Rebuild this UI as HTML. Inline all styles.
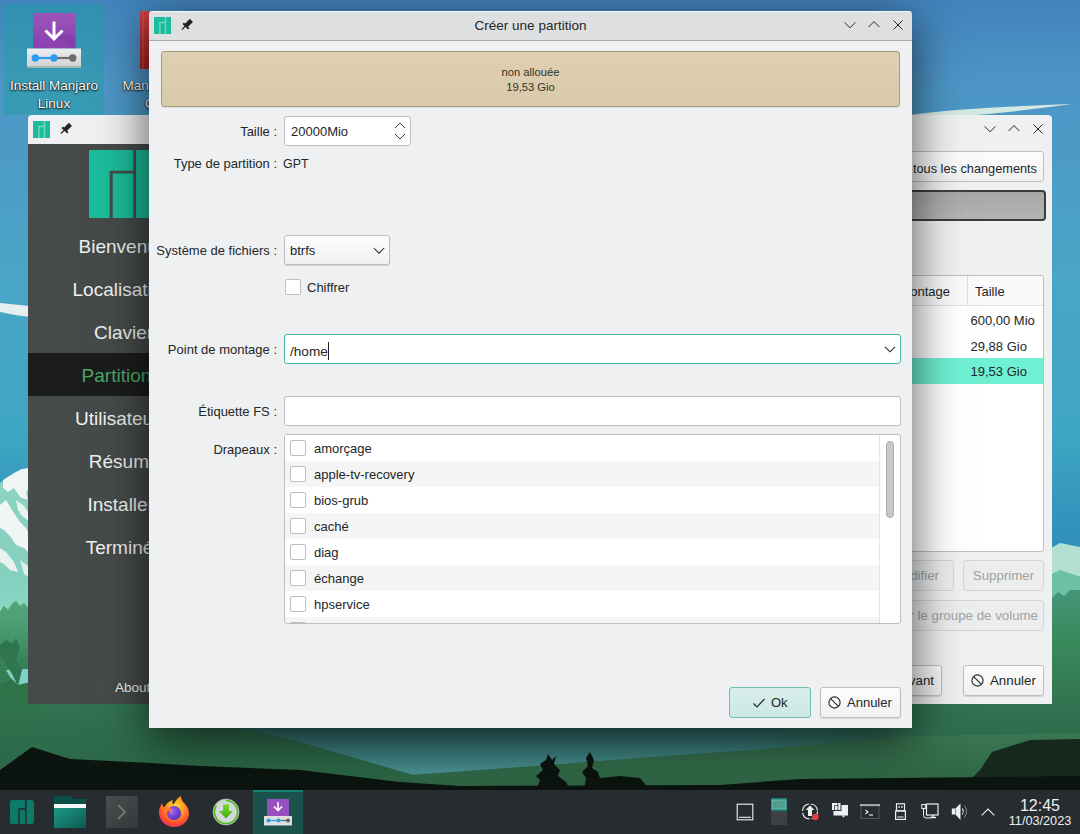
<!DOCTYPE html>
<html><head><meta charset="utf-8">
<style>
*{box-sizing:border-box;margin:0;padding:0}
html,body{width:1080px;height:834px;overflow:hidden}
body{position:relative;font-family:"Liberation Sans",sans-serif;color:#232627;background:#3b7fb6}
.a{position:absolute}
#wall{position:absolute;left:0;top:0;width:1080px;height:790px}
/* desktop icons */
.dlabel{position:absolute;color:#fff;font-size:13.5px;line-height:18px;text-align:center;text-shadow:0 1px 2px #000,0 0 1px #000}
/* calamares */
#cal{left:28px;top:115px;width:1024px;height:589px;background:#eff0f1;border-radius:4px 4px 0 0;overflow:hidden}
#side{left:0;top:29px;width:190px;height:560px;background:#464a49}
.si{position:absolute;left:0;width:190px;text-align:center;font-size:19px;color:#eff0f1;height:43px;line-height:45px}
/* dialog */
#dlg{left:149px;top:11px;width:763px;height:717px;background:#eff0f1;border-radius:4px 4px 0 0;overflow:hidden}
#dtb{left:0;top:0;width:763px;height:30px;background:#dedfe0;border-bottom:1px solid #a8a9aa;box-shadow:inset 0 1px 0 #f8f9f9}
.lbl{position:absolute;font-size:13px;white-space:nowrap;text-align:right}
.fld{position:absolute;background:#fff;border:1px solid #bcbebf;border-radius:3px}
.btn{position:absolute;border:1px solid #bcbebf;border-radius:3px;background:linear-gradient(#fcfcfc,#f1f1f1);font-size:13px}
</style></head><body>
<svg id="wall" width="1080" height="790" viewBox="0 0 1080 790">
  <defs>
    <linearGradient id="sky" x1="0" y1="0" x2="0" y2="1">
      <stop offset="0" stop-color="#4283bd"/>
      <stop offset="0.1" stop-color="#4d95c6"/>
      <stop offset="0.35" stop-color="#4aa5c6"/>
      <stop offset="0.55" stop-color="#3ea6c2"/>
      <stop offset="0.68" stop-color="#3090ba"/>
    </linearGradient>
    <linearGradient id="snowL" x1="0" y1="0" x2="0" y2="1">
      <stop offset="0" stop-color="#e8f4f0"/>
      <stop offset="0.5" stop-color="#bfe6da"/>
      <stop offset="1" stop-color="#7fd0c0"/>
    </linearGradient>
    <linearGradient id="forest" x1="0" y1="0" x2="0" y2="1">
      <stop offset="0" stop-color="#45967a"/>
      <stop offset="0.25" stop-color="#3a8a5c"/>
      <stop offset="0.6" stop-color="#317250"/>
      <stop offset="1" stop-color="#2a6444"/>
    </linearGradient>
    <linearGradient id="mist" x1="0" y1="0" x2="0" y2="1">
      <stop offset="0" stop-color="#2c6a6a"/>
      <stop offset="1" stop-color="#4b9190"/>
    </linearGradient>
  </defs>
  <rect width="1080" height="790" fill="url(#sky)"/>
  <!-- cloud wisps -->
  <path d="M900 116 C960 108 1020 106 1072 104 C1030 110 980 116 900 120Z" fill="#d4e8e2"/>
  <path d="M0 303 C10 304 20 305 30 306 L30 317 C20 316 10 314 0 312Z" fill="#e6eeee"/>
  <!-- mountain left -->
  <defs><linearGradient id="mtl" x1="0" y1="0" x2="0" y2="1"><stop offset="0" stop-color="#8fd3c4"/><stop offset="0.7" stop-color="#84d0bf"/><stop offset="1" stop-color="#8ed9c6"/></linearGradient></defs>
  <path d="M0 483 L10 476 L20 470 L28 468 L60 480 L60 620 L0 620Z" fill="url(#mtl)"/>
  <path d="M3 480 L14 473 L22 469 L30 468 L32 485 L26 492 L28 500 L20 497 L14 488 L8 492 L3 488Z" fill="#eef5f3"/>
  <path d="M0 505 L6 500 L12 510 L20 522 L26 528 L32 540 L32 556 L24 548 L16 545 L10 536 L4 530 L0 528Z" fill="#f0f6f4"/>
  <path d="M0 548 L6 552 L14 562 L18 572 L10 570 L4 564 L0 562Z" fill="#e8f3f0"/>
  <path d="M16 500 L24 506 L30 515 L30 522 L22 516 L18 510Z" fill="#e8f3f0"/>
  <path d="M20 560 L28 566 L30 578 L24 574Z" fill="#dcefea"/>
  <!-- mountain right -->
  <path d="M1030 560 L1060 543 L1085 548 L1085 620 L1020 620Z" fill="#b4e0d4"/>
  <path d="M1030 585 L1060 570 L1085 578 L1085 620 L1020 620Z" fill="#6cc0a6"/>
  <!-- forest -->
  <path d="M0 612 L4 606 L8 610 L12 604 L16 601 L20 606 L24 603 L28 608 L40 615 L80 640 L200 660 L1000 640 L1040 596 L1052 598 L1058 592 L1064 596 L1070 590 L1085 590 L1085 790 L0 790Z" fill="url(#forest)"/>
  
  <!-- left forest details -->
  <defs><linearGradient id="lf" x1="0" y1="0" x2="0" y2="1"><stop offset="0" stop-color="#55a67a"/><stop offset="1" stop-color="#55a67a" stop-opacity="0"/></linearGradient></defs><path d="M0 612 L4 606 L8 610 L12 604 L16 601 L20 606 L24 603 L28 608 L40 615 L40 660 L0 660Z" fill="url(#lf)"/>
  <defs><linearGradient id="lf2" x1="0" y1="0" x2="0" y2="1"><stop offset="0" stop-color="#2c7246"/><stop offset="1" stop-color="#2c7246" stop-opacity="0"/></linearGradient></defs><path d="M0 684 L10 680 L28 684 L40 686 L40 740 L0 740Z" fill="url(#lf2)"/>
  <path d="M6 670 L28 669 L30 682 L18 685 L10 677Z" fill="#7fd0c6"/>
  <path d="M0 645 L6 640 L12 644 L16 638 L20 648 L16 660 L22 670 L18 686 L12 674 L6 664 L0 656Z" fill="#2f7550"/>
  <!-- mist valley -->
  <defs>
    <linearGradient id="mistv" x1="0" y1="0" x2="0" y2="1"><stop offset="0" stop-color="#2f6e6c"/><stop offset="1" stop-color="#4c9696"/></linearGradient>
    <linearGradient id="shd" x1="0" y1="0" x2="0" y2="1"><stop offset="0" stop-color="#000" stop-opacity="0.45"/><stop offset="1" stop-color="#000" stop-opacity="0"/></linearGradient>
    <linearGradient id="hill" x1="0" y1="0" x2="0" y2="1"><stop offset="0" stop-color="#3b7752"/><stop offset="1" stop-color="#2c6243"/></linearGradient>
  </defs>
  
  <defs><linearGradient id="hfade" x1="0" y1="0" x2="1" y2="0"><stop offset="0" stop-color="#fff"/><stop offset="0.7" stop-color="#fff"/><stop offset="1" stop-color="#000"/></linearGradient><mask id="mm" maskUnits="userSpaceOnUse" x="240" y="720" width="720" height="70"><rect x="240" y="720" width="720" height="70" fill="url(#hfade)"/></mask></defs><path d="M240 728 L960 728 L960 738 C760 748 600 760 420 777 C360 760 300 740 240 728Z" fill="url(#mistv)" mask="url(#mm)"/>
  <path d="M380 777 C500 769 620 759 740 751 C800 747 860 740 920 736 L1085 733 L1085 790 L380 790Z" fill="url(#hill)"/>
  
  <!-- dark silhouettes -->
  <path d="M960 790 L980 770 L992 752 L1030 740 L1085 739 L1085 790Z" fill="#16291c"/><path d="M0 770 L32 747 L70 759 L150 763 L200 766 L300 770 L350 776 L400 782 L460 786 L720 785 L800 779 L1085 776 L1085 790 L0 790Z" fill="#0b140f"/>
  <path d="M536 790 L540 780 L536 776 L543 770 L540 764 L546 760 L548 754 L552 760 L556 756 L554 764 L560 770 L558 776 L566 782 L570 790Z M584 790 L586 778 L582 772 L588 766 L586 758 L590 752 L594 760 L592 768 L598 772 L600 778 L620 776 L640 778 L650 790Z" fill="#0b140f"/>
  
</svg>

<!-- desktop icon highlight -->
<div class="a" style="left:4px;top:4px;width:100px;height:111px;background:rgba(30,160,160,0.45);border-radius:2px"></div>
<svg class="a" style="left:26px;top:12px" width="56" height="58" viewBox="0 0 56 58"><defs><linearGradient id="pu" x1="0" y1="0" x2="0" y2="1"><stop offset="0" stop-color="#9a55b8"/><stop offset="1" stop-color="#8a40b0"/></linearGradient><linearGradient id="tr" x1="0" y1="0" x2="0" y2="1"><stop offset="0" stop-color="#eceeef"/><stop offset="1" stop-color="#cfd1d2"/></linearGradient></defs>
<rect x="7" y="1" width="42.5" height="35.5" fill="url(#pu)"/><path d="M28 24 L49.5 36.5 L49.5 22Z" fill="#7a35a0" opacity="0.35"/>
<path d="M28 9.5V27M19.5 18.5L28 27L36.5 18.5" stroke="#fff" stroke-width="3" fill="none"/>
<rect x="1" y="36.5" width="54" height="19" fill="url(#tr)"/><rect x="1" y="54" width="54" height="1.5" fill="#b0b3b5"/>
<path d="M9 46H28" stroke="#2a9df0" stroke-width="2.2"/><path d="M28 46H47" stroke="#6a6c6d" stroke-width="2.2"/>
<circle cx="9.3" cy="46" r="3.7" fill="#2a9df0"/><circle cx="28" cy="46" r="3.7" fill="#2a9df0"/><circle cx="46.7" cy="46" r="3.7" fill="#6a6c6d"/></svg>
<div class="dlabel" style="left:4px;top:77px;width:100px">Install Manjaro<br>Linux</div>
<svg class="a" style="left:130px;top:10px" width="20" height="60" viewBox="0 0 20 60"><defs><linearGradient id="rd" x1="0" y1="0" x2="0" y2="1"><stop offset="0" stop-color="#d04040"/><stop offset="1" stop-color="#a82020"/></linearGradient></defs><rect x="10" y="1" width="12" height="58" fill="url(#rd)"/><rect x="12.5" y="1" width="1" height="58" fill="#e07070" opacity="0.6"/></svg>
<div class="dlabel" style="left:113px;top:77px;width:100px">Manjaro User<br>Guide</div>

<!-- calamares window -->
<div id="cal" class="a">
  <svg class="a" style="left:5px;top:6px" width="17" height="17" viewBox="0 0 17 17"><rect width="17" height="17" fill="#74d6c2"/><path d="M0 0H10.7V4.8H5.2V17H0Z M6.6 6.2H10.7V17H6.6Z M12.2 0H17V17H12.2Z" fill="#1abc9c"/></svg>
  <svg class="a" style="left:30.7px;top:7.2px" width="14" height="14" viewBox="0 0 14 14"><path d="M1.9 11.6L6 7.5" stroke="#232627" stroke-width="1.3"/><path d="M3.2 5.3L8.8 10.9" stroke="#232627" stroke-width="2"/><path d="M6 7.8L11.4 2.4" stroke="#232627" stroke-width="4.4"/></svg>
  <div id="side" class="a">
    <svg class="a" style="left:61px;top:6px" width="68" height="68" viewBox="0 0 68 68"><path d="M0 0H44.2V20.8H20.7V68H0Z M23.7 23.5H44.2V68H23.7Z M47.1 0H68V68H47.1Z" fill="#1bbc9b"/></svg>
    <div class="si" style="left:0.5px;top:79.5px">Bienvenue</div>
    <div class="si" style="left:-0.3px;top:122.5px">Localisation</div>
    <div class="si" style="left:0.6px;top:165.5px">Clavier</div>
    <div class="si" style="left:-1.8px;top:208.5px;background:#1b1d1c;color:#4fa66a">Partitions</div>
    <div class="si" style="left:-1px;top:251.5px">Utilisateurs</div>
    <div class="si" style="left:1.2px;top:294.5px">Résumé</div>
    <div class="si" style="left:-2.3px;top:337.5px">Installer</div>
    <div class="si" style="left:-3.5px;top:380.5px">Terminé</div>
    <svg class="a" style="left:68px;top:536px" width="14" height="14" viewBox="0 0 14 14"><circle cx="7" cy="7" r="6" stroke="#4d5151" stroke-width="1" fill="none"/><path d="M7 4V10" stroke="#4d5151"/></svg>
    <div class="a" style="left:87px;top:536px;font-size:13.5px;line-height:16px;color:#eff0f1">About</div>
  </div>
  <!-- right side content -->
  <svg class="a" style="left:955px;top:8px" width="14" height="14" viewBox="0 0 14 14"><path d="M1.6 3.4L7 8.8L12.4 3.4" stroke="#232627" stroke-width="1" fill="none"/></svg>
  <svg class="a" style="left:979px;top:7px" width="14" height="14" viewBox="0 0 14 14"><path d="M1.6 9L7 3.6L12.4 9" stroke="#232627" stroke-width="1" fill="none"/></svg>
  <svg class="a" style="left:1003px;top:7px" width="14" height="14" viewBox="0 0 14 14"><path d="M2.5 2.5L11.5 11.5M11.5 2.5L2.5 11.5" stroke="#232627" stroke-width="1" fill="none"/></svg>
  <div class="btn" style="left:700px;top:36px;width:316px;height:31px"></div>
  <div class="a" style="left:700px;top:46px;width:309px;text-align:right;font-size:12.75px;line-height:16px">Revenir sur tous les changements</div>
  <div class="a" style="left:180px;top:75px;width:838px;height:31px;border:2px solid #3a3c3d;border-radius:4px;background:linear-gradient(#a6a6a6,#b4b4b4)"></div>
  <div class="fld" style="left:180px;top:160px;width:836px;height:277px;overflow:hidden">
    <div class="a" style="left:0;top:0;width:834px;height:30px;background:#fafafa;border-bottom:1px solid #dcdddd"></div>
    <div class="a" style="left:758px;top:0;width:1px;height:30px;background:#dcdddd"></div>
    <div class="a" style="left:540px;top:7.5px;width:201px;text-align:right;font-size:13px;line-height:16px">Point de montage</div>
    <div class="a" style="left:766px;top:7.5px;font-size:13px;line-height:16px">Taille</div>
    <div class="a" style="left:761.5px;top:37px;font-size:13px;line-height:16px">600,00 Mio</div>
    <div class="a" style="left:761.5px;top:63px;font-size:13px;line-height:16px">29,88 Gio</div>
    <div class="a" style="left:0;top:82px;width:834px;height:26px;background:#6ff0d3"></div>
    <div class="a" style="left:761.5px;top:88px;font-size:13px;line-height:16px">19,53 Gio</div>
  </div>
  <div class="btn" style="left:700px;top:445px;width:226px;height:31px;color:#a4a6a7;background:#eceded;border-color:#d4d5d6"></div>
  <div class="a" style="left:700px;top:453px;width:211px;text-align:right;font-size:13.3px;line-height:16px;color:#a0a2a3">Modifier</div>
  <div class="btn" style="left:935px;top:445px;width:81px;height:31px;background:#eceded;border-color:#d4d5d6"></div>
  <div class="a" style="left:935px;top:453px;width:81px;text-align:center;font-size:13.3px;line-height:16px;color:#a0a2a3">Supprimer</div>
  <div class="btn" style="left:700px;top:485px;width:316px;height:31px;background:#eceded;border-color:#d4d5d6"></div>
  <div class="a" style="left:700px;top:493px;width:310px;text-align:right;font-size:13.3px;line-height:16px;color:#a0a2a3">Redimensionner le groupe de volume</div>
  <div class="btn" style="left:830px;top:550px;width:84px;height:31px;box-shadow:0 1px 1px rgba(0,0,0,0.12)"></div>
  <div class="a" style="left:830px;top:558px;width:76px;text-align:right;font-size:13.3px;line-height:16px">Suivant</div>
  <div class="btn" style="left:935px;top:550px;width:81px;height:31px;box-shadow:0 1px 1px rgba(0,0,0,0.12)"></div>
  <svg class="a" style="left:942px;top:558px" width="15" height="15" viewBox="0 0 15 15"><circle cx="7.5" cy="7.5" r="5.6" stroke="#232627" stroke-width="1.1" fill="none"/><path d="M3.6 3.6L11.4 11.4" stroke="#232627" stroke-width="1.1"/></svg>
  <div class="a" style="left:962px;top:558px;font-size:13.3px;line-height:16px">Annuler</div>
</div>
<!-- shadow of dialog -->
<div class="a" style="left:149px;top:11px;width:763px;height:717px;box-shadow:0 12px 44px 2px rgba(0,0,0,0.62);"></div>

<!-- dialog -->
<div id="dlg" class="a">
  <div id="dtb" class="a">
    <svg class="a" style="left:5px;top:6px" width="17" height="17" viewBox="0 0 17 17"><rect width="17" height="17" fill="#74d6c2"/><path d="M0 0H10.7V4.8H5.2V17H0Z M6.6 6.2H10.7V17H6.6Z M12.2 0H17V17H12.2Z" fill="#1abc9c"/></svg>
    <svg class="a" style="left:31px;top:7px" width="14" height="14" viewBox="0 0 14 14"><path d="M1.9 11.6L6 7.5" stroke="#232627" stroke-width="1.3"/><path d="M3.2 5.3L8.8 10.9" stroke="#232627" stroke-width="2"/><path d="M6 7.8L11.4 2.4" stroke="#232627" stroke-width="4.4"/></svg>
    <div class="a" style="left:0;top:0;width:763px;text-align:center;font-size:13.5px;line-height:29px;color:#232627">Créer une partition</div>
    <svg class="a" style="left:694px;top:8px" width="14" height="14" viewBox="0 0 14 14"><path d="M1.6 3.4L7 8.8L12.4 3.4" stroke="#232627" stroke-width="1" fill="none"/></svg>
    <svg class="a" style="left:718px;top:7px" width="14" height="14" viewBox="0 0 14 14"><path d="M1.6 9L7 3.6L12.4 9" stroke="#232627" stroke-width="1" fill="none"/></svg>
    <svg class="a" style="left:742px;top:7px" width="14" height="14" viewBox="0 0 14 14"><path d="M2.5 2.5L11.5 11.5M11.5 2.5L2.5 11.5" stroke="#232627" stroke-width="1" fill="none"/></svg>
  </div>
  <div class="a" style="left:12px;top:40px;width:739px;height:56px;background:linear-gradient(#ddcfb1,#d9cba9);border:1px solid #a79a7e;border-radius:3px;box-shadow:0 1px 0 rgba(0,0,0,0.08)"></div>
  <div class="a" style="left:12px;top:54px;width:739px;text-align:center;font-size:11.2px;line-height:15px;color:#33332f">non allouée<br>19,53 Gio</div>

  <div class="lbl" style="right:635px;top:113px;line-height:16px">Taille :</div>
  <div class="fld" style="left:135px;top:105px;width:127px;height:30px"></div>
  <div class="lbl" style="left:142px;top:113px;text-align:left;line-height:16px">20000Mio</div>
  <svg class="a" style="left:245px;top:110px" width="12" height="20" viewBox="0 0 12 20"><path d="M1 7L6 2L11 7M1 13L6 18L11 13" stroke="#2f3234" stroke-width="1" fill="none"/></svg>

  <div class="lbl" style="right:635px;top:145px;line-height:16px">Type de partition :</div>
  <div class="lbl" style="left:134px;top:145px;text-align:left;line-height:16px;font-size:12.4px">GPT</div>

  <div class="lbl" style="right:635px;top:232px;line-height:16px">Système de fichiers :</div>
  <div class="btn" style="left:135px;top:224px;width:106px;height:30px;box-shadow:0 1px 1px rgba(0,0,0,0.15)"></div>
  <div class="lbl" style="left:141px;top:232px;text-align:left;line-height:16px">btrfs</div>
  <svg class="a" style="left:223px;top:233px" width="14" height="14" viewBox="0 0 14 14"><path d="M1.8 4L7 9.2L12.2 4" stroke="#232627" stroke-width="1.05" fill="none"/></svg>

  <div class="fld" style="left:136px;top:268px;width:16px;height:16px;border-radius:2px"></div>
  <div class="lbl" style="left:158px;top:269px;text-align:left;line-height:16px">Chiffrer</div>

  <div class="lbl" style="right:635px;top:331px;line-height:16px">Point de montage :</div>
  <div class="fld" style="left:135px;top:323px;width:617px;height:30px;border-color:#3daee9;border-color:#48b9a2"></div>
  <div class="lbl" style="left:141px;top:331px;text-align:left;line-height:16px;font-size:13.6px">/home<span style="display:inline-block;width:1px;height:18px;background:#232627;vertical-align:-4px;margin-left:0.5px"></span></div>
  <svg class="a" style="left:734px;top:332px" width="14" height="14" viewBox="0 0 14 14"><path d="M2 3.8L7 8.8L12 3.8" stroke="#232627" stroke-width="1.05" fill="none"/></svg>

  <div class="lbl" style="right:635px;top:393px;line-height:16px">Étiquette FS :</div>
  <div class="fld" style="left:135px;top:385px;width:617px;height:30px"></div>

  <div class="lbl" style="right:635px;top:431px;line-height:16px">Drapeaux :</div>
  <div class="fld" style="left:135px;top:423px;width:617px;height:190px;overflow:hidden">
    <div class="a" style="left:0;top:0;width:595px;height:188px;border-right:1px solid #e4e5e6"></div>
    <div class="a" style="left:0;top:0px;width:594px;height:26px;background:#ffffff"><div class="a" style="left:5px;top:5px;width:16px;height:16px;border:1px solid #bcbebf;border-radius:2px;background:#fff"></div><div class="a" style="left:29px;top:6px;font-size:13px;line-height:16px;white-space:nowrap">amorçage</div></div>
<div class="a" style="left:0;top:26px;width:594px;height:26px;background:#f5f5f5"><div class="a" style="left:5px;top:5px;width:16px;height:16px;border:1px solid #bcbebf;border-radius:2px;background:#fff"></div><div class="a" style="left:29px;top:6px;font-size:13px;line-height:16px;white-space:nowrap">apple-tv-recovery</div></div>
<div class="a" style="left:0;top:52px;width:594px;height:26px;background:#ffffff"><div class="a" style="left:5px;top:5px;width:16px;height:16px;border:1px solid #bcbebf;border-radius:2px;background:#fff"></div><div class="a" style="left:29px;top:6px;font-size:13px;line-height:16px;white-space:nowrap">bios-grub</div></div>
<div class="a" style="left:0;top:78px;width:594px;height:26px;background:#f5f5f5"><div class="a" style="left:5px;top:5px;width:16px;height:16px;border:1px solid #bcbebf;border-radius:2px;background:#fff"></div><div class="a" style="left:29px;top:6px;font-size:13px;line-height:16px;white-space:nowrap">caché</div></div>
<div class="a" style="left:0;top:104px;width:594px;height:26px;background:#ffffff"><div class="a" style="left:5px;top:5px;width:16px;height:16px;border:1px solid #bcbebf;border-radius:2px;background:#fff"></div><div class="a" style="left:29px;top:6px;font-size:13px;line-height:16px;white-space:nowrap">diag</div></div>
<div class="a" style="left:0;top:130px;width:594px;height:26px;background:#f5f5f5"><div class="a" style="left:5px;top:5px;width:16px;height:16px;border:1px solid #bcbebf;border-radius:2px;background:#fff"></div><div class="a" style="left:29px;top:6px;font-size:13px;line-height:16px;white-space:nowrap">échange</div></div>
<div class="a" style="left:0;top:156px;width:594px;height:26px;background:#ffffff"><div class="a" style="left:5px;top:5px;width:16px;height:16px;border:1px solid #bcbebf;border-radius:2px;background:#fff"></div><div class="a" style="left:29px;top:6px;font-size:13px;line-height:16px;white-space:nowrap">hpservice</div></div>
<div class="a" style="left:0;top:182px;width:594px;height:26px;background:#f5f5f5"><div class="a" style="left:5px;top:5px;width:16px;height:16px;border:1px solid #bcbebf;border-radius:2px;background:#fff"></div><div class="a" style="left:29px;top:6px;font-size:13px;line-height:16px;white-space:nowrap"></div></div>

    <div class="a" style="left:601px;top:6px;width:8px;height:77px;background:#c8c9ca;border:1px solid #a9aaab;border-radius:4px"></div>
  </div>

  <div class="btn" style="left:580px;top:676px;width:82px;height:31px;background:linear-gradient(#d8efeb,#cbe8e2);border-color:#6fbfae"></div>
  <svg class="a" style="left:603px;top:685px" width="14" height="14" viewBox="0 0 14 14"><path d="M1.5 7.5L5 11L12.5 3" stroke="#232627" stroke-width="1.2" fill="none"/></svg>
  <div class="lbl" style="left:622px;top:684px;text-align:left;line-height:16px">Ok</div>
  <div class="btn" style="left:670.5px;top:676px;width:81px;height:31px;box-shadow:0 1px 1px rgba(0,0,0,0.12)"></div>
  <svg class="a" style="left:678px;top:684px" width="15" height="15" viewBox="0 0 15 15"><circle cx="7.5" cy="7.5" r="5.6" stroke="#232627" stroke-width="1.1" fill="none"/><path d="M3.6 3.6L11.4 11.4" stroke="#232627" stroke-width="1.1"/></svg>
  <div class="lbl" style="left:698px;top:684px;text-align:left;line-height:16px">Annuler</div>
</div>

<!-- taskbar -->
<div class="a" style="left:0;top:790px;width:1080px;height:44px;background:#272c30">
  <svg class="a" style="left:10px;top:10px" width="24" height="24" viewBox="0 0 24 24"><path d="M2.5 0H15V8.2H8.3V24H2.5Q0 24 0 21.5V2.5Q0 0 2.5 0Z M9.8 9.8H15V24H9.8Z M16.6 0H21.5Q24 0 24 2.5V21.5Q24 24 21.5 24H16.6Z" fill="#0c7a69"/></svg>
  <svg class="a" style="left:54px;top:6px" width="32" height="32" viewBox="0 0 32 32"><defs><linearGradient id="fo" x1="0" y1="0" x2="1" y2="1"><stop offset="0" stop-color="#1d9a88"/><stop offset="1" stop-color="#0b5a52"/></linearGradient></defs><path d="M0 0H17L18 3H32V32H0Z" fill="#0b5048"/><rect x="0" y="8" width="32" height="4" fill="#f4f8f7"/><rect x="0" y="12" width="32" height="20" fill="url(#fo)"/></svg>
  <svg class="a" style="left:106px;top:6px" width="32" height="32" viewBox="0 0 32 32"><defs><linearGradient id="te" x1="0" y1="0" x2="1" y2="1"><stop offset="0" stop-color="#4a4e4e"/><stop offset="1" stop-color="#353838"/></linearGradient></defs><rect width="32" height="32" fill="url(#te)"/><path d="M12 9L19 16L12 23" stroke="#6e7272" stroke-width="2" fill="none"/></svg>
  <svg class="a" style="left:158px;top:5px" width="32" height="33" viewBox="0 0 32 33"><defs><radialGradient id="ff" cx="0.55" cy="0.35" r="0.75"><stop offset="0" stop-color="#ffe040"/><stop offset="0.35" stop-color="#ffa020"/><stop offset="0.7" stop-color="#ff5030"/><stop offset="1" stop-color="#e0207a"/></radialGradient><radialGradient id="fg" cx="0.35" cy="0.35" r="0.7"><stop offset="0" stop-color="#a060ff"/><stop offset="1" stop-color="#5030c0"/></radialGradient></defs>
<path d="M16 32C7.5 32 1 25.5 1 17.5C1 13.5 2.3 10.5 4.5 8C4.3 10 5 11.8 6.3 12.8C8 8.5 11.5 5.8 15 5C14 7 14.3 8.5 15.5 9.5C17.5 5.5 20 2.5 23 0.8C22.8 3.5 24 6 26.5 8.5C29.5 11.5 31 14.5 31 18C31 26 24.5 32 16 32Z" fill="url(#ff)"/>
<circle cx="16" cy="18" r="7" fill="url(#fg)"/>
<path d="M3 13C5 11.5 9 11 12 13C15 15 15 19 12.5 20.5C14 17.5 11.5 15 8.5 15.5C6.5 15.8 4.5 15 3 13Z" fill="#ff7a20"/></svg>
  <svg class="a" style="left:212px;top:8px" width="28" height="28" viewBox="0 0 28 28"><defs><linearGradient id="dg" x1="0" y1="0" x2="0" y2="1"><stop offset="0" stop-color="#7ad62a"/><stop offset="1" stop-color="#3fb010"/></linearGradient></defs><circle cx="14" cy="14" r="13" fill="#d5d7d8" stroke="#aeb0b1" stroke-width="0.8"/><path d="M14 2.5A11.5 11.5 0 1 1 4.5 7.5" fill="none" stroke="#4cc01a" stroke-width="1.6"/><path d="M4.5 7.5A11.5 11.5 0 0 1 14 2.5" fill="none" stroke="#b8e0a0" stroke-width="1.2"/><path d="M11 6.5H17V13H21L14 20.5L7 13H11Z" fill="url(#dg)"/></svg>
  <div class="a" style="left:253px;top:0;width:50px;height:44px;background:#1c524c;border-top:2.5px solid #13836f"></div>
  <svg class="a" style="left:264px;top:8px" width="28" height="28" viewBox="0 0 28 28"><rect x="3" y="1" width="22" height="17" fill="#9a4fc0"/><path d="M14 4V12M10 8.5L14 12.5L18 8.5" stroke="#fff" stroke-width="1.6" fill="none"/><rect x="0" y="18" width="28" height="9.5" fill="#dcdedf"/><path d="M4 22.5H17" stroke="#2d9ce8" stroke-width="1.2"/><path d="M17 22.5H24" stroke="#666" stroke-width="1.2"/><circle cx="4.5" cy="22.5" r="2" fill="#2d9ce8"/><circle cx="14.5" cy="22.5" r="2" fill="#2d9ce8"/><circle cx="24" cy="22.5" r="2" fill="#5d5f60"/></svg>

  <svg class="a" style="left:736px;top:13px" width="18" height="18" viewBox="0 0 18 18"><rect x="1.2" y="1.2" width="15.6" height="15.6" fill="none" stroke="#eff0f1" stroke-width="1.1"/><path d="M3 14.3H15" stroke="#eff0f1" stroke-width="1.1"/></svg>
  <svg class="a" style="left:770px;top:8px" width="18" height="28" viewBox="0 0 18 28"><rect x="1" y="0" width="16" height="13" fill="#167d6e"/><rect x="2" y="2" width="14" height="9" fill="#4e9f92" stroke="#8fcfc3" stroke-width="0.6"/><rect x="1" y="13" width="16" height="14" fill="#3d4145"/></svg>
  <svg class="a" style="left:801px;top:12px" width="20" height="20" viewBox="0 0 20 20"><circle cx="9" cy="9.5" r="7.5" fill="none" stroke="#eff0f1" stroke-width="1.1" stroke-dasharray="10 2"/><path d="M9 3.5L13.5 8H11V14H7V8H4.5Z" fill="#eff0f1"/><circle cx="14.5" cy="15" r="3.2" fill="#e93a4a"/></svg>
  <svg class="a" style="left:831px;top:12px" width="18" height="18" viewBox="0 0 18 18"><rect x="2.5" y="3" width="14.5" height="10.5" fill="#eff0f1"/><path d="M10.5 13.5L12.5 15.5L14.5 13.5Z" fill="#eff0f1"/><rect x="0" y="0" width="10.5" height="9" fill="#272c30"/><path d="M1 1H6.5V3.2H3.2V8H1Z M4 4H6.5V8H4Z M7.3 1H9.5V8H7.3Z" fill="#eff0f1"/></svg>
  <svg class="a" style="left:860px;top:14px" width="20" height="16" viewBox="0 0 20 16"><path d="M0 1.2H20" stroke="#eff0f1" stroke-width="1.6"/><rect x="1" y="2" width="18" height="12.5" fill="none" stroke="#55595c" stroke-width="1"/><path d="M5.5 6L8 8L5.5 10" stroke="#eff0f1" stroke-width="1.1" fill="none"/><path d="M9 11H13" stroke="#eff0f1" stroke-width="1.1"/></svg>
  <svg class="a" style="left:895px;top:13px" width="11" height="18" viewBox="0 0 11 18"><rect x="1.5" y="0.8" width="8" height="7" fill="none" stroke="#eff0f1" stroke-width="1.2"/><rect x="3.5" y="3" width="1.2" height="2" fill="#eff0f1"/><rect x="6.3" y="3" width="1.2" height="2" fill="#eff0f1"/><rect x="0.6" y="8" width="9.8" height="8.4" fill="none" stroke="#eff0f1" stroke-width="1.2"/><path d="M2.5 14H8.5" stroke="#eff0f1" stroke-width="1.1"/></svg>
  <svg class="a" style="left:921px;top:13px" width="18" height="18" viewBox="0 0 18 18"><rect x="5.5" y="1" width="11.5" height="11" fill="none" stroke="#eff0f1" stroke-width="1.2"/><path d="M9 14.5H15M12 12V14.5" stroke="#eff0f1" stroke-width="1.4"/><rect x="0.8" y="1.5" width="3.5" height="4" fill="none" stroke="#eff0f1" stroke-width="1"/><path d="M2.5 6V12.5Q2.5 15 5 15H9" stroke="#eff0f1" stroke-width="1" fill="none"/></svg>
  <svg class="a" style="left:951px;top:13px" width="18" height="18" viewBox="0 0 18 18"><path d="M0.8 5.5H4V11.5H0.8Z" fill="#eff0f1"/><path d="M4.5 5.5L9.5 0.5V17L4.5 11.5Z" fill="#eff0f1"/><path d="M11.5 5.5Q13 8.5 11.5 11.5" stroke="#eff0f1" stroke-width="1.1" fill="none"/><path d="M13.5 2.5Q17.5 8.5 13.5 14.5" stroke="#8a8d90" stroke-width="1" fill="none"/></svg>
  <svg class="a" style="left:981px;top:18px" width="14" height="8" viewBox="0 0 14 8"><path d="M0.7 7.3L7 1L13.3 7.3" stroke="#eff0f1" stroke-width="1.1" fill="none"/></svg>
  <div class="a" style="left:1000px;top:7px;width:80px;text-align:center;font-size:16px;line-height:18px;color:#eff0f1">12:45</div>
  <div class="a" style="left:1000px;top:24px;width:80px;text-align:center;font-size:12.7px;line-height:14px;color:#eff0f1">11/03/2023</div>
</div>
</body></html>
